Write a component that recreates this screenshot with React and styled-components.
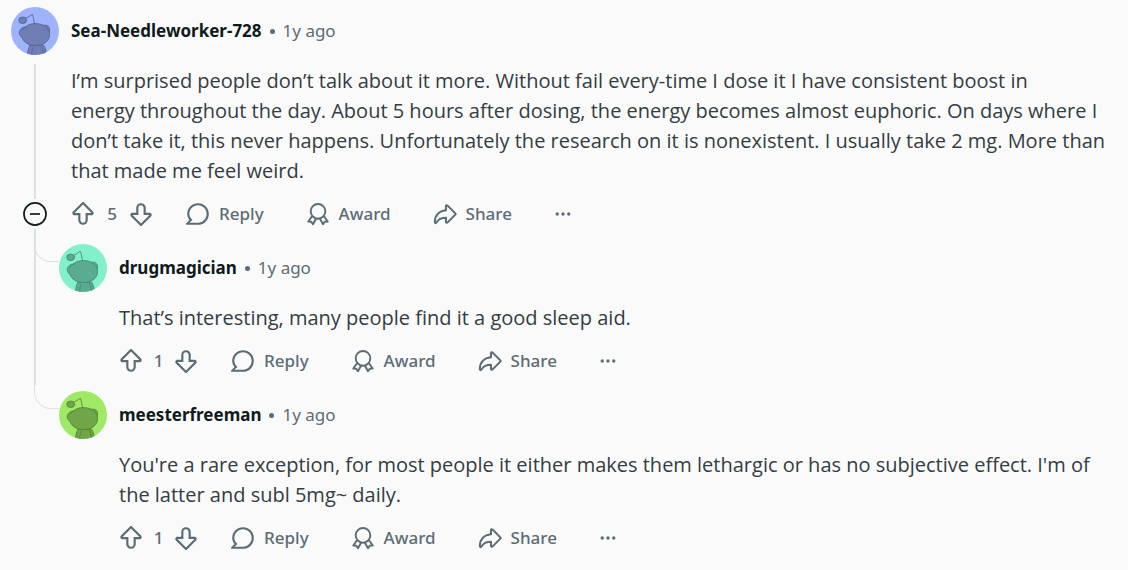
import React from 'react';
import styled, { createGlobalStyle } from 'styled-components';

const GlobalStyle = createGlobalStyle`
    * {
        box-sizing: border-box;
    }
    body {
        margin: 0;
        background: #fafafa;
        color: #333d42;
        font-family: 'Segoe UI', 'Noto Sans', 'Open Sans', sans-serif;
    }
`;

const Thread = styled.main`
    padding: 7px 11px 12px;
`;

const CommentGrid = styled.article`
    display: grid;
    grid-template-columns: 48px minmax(0, 1fr);
    column-gap: 12px;
`;

const AvatarLink = styled.a`
    display: block;
    width: 48px;
    height: 48px;
    border-radius: 50%;
    overflow: hidden;
    background: ${({ $color }) => $color};
`;

const CommentHeader = styled.header`
    display: flex;
    align-items: center;
    gap: 8px;
    height: 48px;
    font-size: 17px;
    line-height: 24px;
    color: #5c6c74;
`;

const Author = styled.a`
    font-weight: 700;
    color: #0f1a1c;
    text-decoration: none;
`;

const Dot = styled.span`
    width: 5px;
    height: 5px;
    border-radius: 50%;
    background: #5c6c74;
`;

const CommentBody = styled.div`
    grid-column: 2;
    padding-top: 11px;
`;

const Text = styled.p`
    margin: 0 0 8px;
    font-family: 'Segoe UI', 'Open Sans', 'Noto Sans', sans-serif;
    font-size: 20px;
    line-height: 30px;
    white-space: pre-line;
`;

const Rail = styled.div`
    display: flex;
    flex-direction: column;
    align-items: center;
    gap: 3px;
    padding-top: 9px;
`;

const RailLine = styled.span`
    width: 2px;
    flex: ${({ $end }) => ($end ? '0 0 5px' : '1')};
    background: #dbe0e4;
`;

const CollapseButton = styled.button`
    display: block;
    width: 24px;
    height: 24px;
    padding: 0;
    border: 0;
    background: none;
    color: #0f1a1c;
    cursor: pointer;
`;

const Replies = styled.ul`
    margin: 0;
    padding: 0;
    list-style: none;
`;

const ReplyItem = styled.li`
    display: grid;
    grid-template-columns: 48px minmax(0, 1fr);

    > article {
        padding-top: 10px;
    }
`;

// The trunk and the elbow share one grid cell, so that the curve leaves the line.
const Branch = styled.div`
    display: grid;
    padding-left: 23px;

    > span {
        grid-area: 1 / 1;
    }
`;

const Trunk = styled.span`
    width: 2px;
    height: ${({ $last }) => ($last ? '4px' : '100%')};
    background: #dbe0e4;
`;

const Elbow = styled.span`
    height: 28px;
    border: solid #dbe0e4;
    border-width: 0 0 1px 1px;
    border-bottom-left-radius: 17px;
`;

const ActionBar = styled.div`
    display: flex;
    align-items: center;
    height: 40px;
    font-size: 17px;
    line-height: 24px;
    font-weight: 500;
    color: #5c6c74;
`;

const Votes = styled.div`
    display: flex;
    align-items: center;
    margin-right: 33px;
`;

const Count = styled.span`
    width: ${({ $compact }) => ($compact ? '31px' : '34px')};
    text-align: center;
`;

const ActionButton = styled.button`
    display: flex;
    align-items: center;
    gap: 9px;
    margin: 0 ${({ $space }) => $space || '0'} 0 0;
    padding: 0;
    border: 0;
    background: none;
    color: inherit;
    font: inherit;
    cursor: pointer;

    svg {
        flex: none;
    }
`;

const Icon = ({ children, size = 24 }) => (
    <svg
        width={size}
        height={size}
        viewBox="0 0 20 20"
        fill="currentColor"
        aria-hidden="true"
    >
        {children}
    </svg>
);

const VoteIcon = ({ down }) => (
    <Icon>
        <path
            transform={down ? 'rotate(180 10 10)' : undefined}
            d="M10 19a3.966 3.966 0 01-3.96-3.962V10.98H2.838a1.731 1.731 0 01-1.605-1.073 1.734 1.734 0 01.377-1.895L9.364.254a.925.925 0 011.272 0l7.754 7.759c.498.499.646 1.242.376 1.894-.27.652-.9 1.073-1.605 1.073h-3.202v4.058A3.965 3.965 0 019.999 19H10zM2.989 9.179H7.84v5.731c0 1.13.81 2.163 1.934 2.278a2.163 2.163 0 002.386-2.15V9.179h4.851L10 2.163 2.989 9.179z"
        />
    </Icon>
);

const ReplyIcon = () => (
    <Icon>
        <path d="M10 1a9 9 0 00-9 9c0 1.947.79 3.58 1.935 4.957L.231 17.661A.784.784 0 00.785 19H10a9 9 0 009-9 9 9 0 00-9-9zm0 16.2H6.162c-.994.004-1.907.053-3.045.144l-.076-.188a36.981 36.981 0 002.328-2.087l-1.05-1.263C3.297 12.576 2.8 11.331 2.8 10c0-3.97 3.23-7.2 7.2-7.2s7.2 3.23 7.2 7.2-3.23 7.2-7.2 7.2z" />
    </Icon>
);

const AwardIcon = () => (
    <Icon>
        <g
            fill="none"
            stroke="currentColor"
            strokeWidth="1.6"
            strokeLinejoin="round"
        >
            <circle cx="10" cy="7.8" r="6.1" />
            <path d="M5 11.9l-3.1 4.3 2.5.3 1.4 2.1 2.7-4.8M15 11.9l3.1 4.3-2.5.3-1.4 2.1-2.7-4.8" />
        </g>
    </Icon>
);

const ShareIcon = () => (
    <Icon>
        <path
            fill="none"
            stroke="currentColor"
            strokeWidth="1.7"
            strokeLinejoin="round"
            d="M12.2 3l6.4 6.5c.3.3.3.7 0 1L12.2 17c-.6.6-1.4.2-1.4-.5v-3.3c-3.7 0-6.2 1.1-7.9 3.9-.5.8-1.4.6-1.4-.4C1.6 11.3 4.9 7.4 10.8 6.9V3.5c0-.8.8-1.1 1.4-.5z"
        />
    </Icon>
);

const MoreIcon = () => (
    <Icon>
        <circle cx="5.2" cy="10" r="1.4" />
        <circle cx="10" cy="10" r="1.4" />
        <circle cx="14.8" cy="10" r="1.4" />
    </Icon>
);

const CollapseIcon = () => (
    <Icon>
        <circle
            cx="10"
            cy="10"
            r="9.2"
            fill="none"
            stroke="currentColor"
            strokeWidth="1.4"
        />
        <path d="M5.8 9.3h8.4v1.4H5.8z" />
    </Icon>
);

const Snoo = ({ fill, line }) => (
    <svg width="48" height="48" viewBox="0 0 48 48" aria-hidden="true">
        <g
            fill={fill}
            stroke={line}
            strokeWidth="0.9"
            strokeLinecap="round"
            strokeLinejoin="round"
        >
            <path d="M16.8 49c-.3-4 .4-8 2.2-11h13.500c2 3 2.800 7 3.200 11z" />
            <path
                d="M22 40.500c-1 2.500-1.300 5-1.200 8M30.500 39.500c1.600 3 2 6 1.900 9"
                fill="none"
            />
            <path
                d="M15.5 10.8c2.2-.2 3.8-2.8 5.8-3.3 1.3 2.5 1.3 6 2.1 9"
                fill="none"
            />
            <ellipse cx="11.7" cy="13.3" rx="3.9" ry="3.3" />
            <path d="M32.5 18.5c3-1.2 6 .7 6.1 3.800.1 2-.6 3.300-1.300 4.200z" />
            <path d="M14.5 20c2.5-2.4 6-3.4 9.8-3.4 8 0 14.2 4 14.3 10.6.1 6.8-5.5 11.3-14.3 11.3-7 0-11.5-3.2-13.3-8-1.8-1.2-3.2-3.6-2.6-6 .7-2.8 3.2-4.4 6.1-4.5z" />
            <path d="M11.5 22.8c.8-1.4 1.900-2.200 3.400-2.600" fill="none" />
        </g>
    </svg>
);

const Comment = ({ comment, children }) => (
    <CommentGrid>
        <AvatarLink
            href="#profile"
            aria-label={comment.author}
            $color={comment.avatar.background}
        >
            <Snoo fill={comment.avatar.fill} line={comment.avatar.line} />
        </AvatarLink>
        <CommentHeader>
            <Author href="#profile">{comment.author}</Author>
            <Dot />
            <time>{comment.time}</time>
        </CommentHeader>
        {children}
        <CommentBody>
            <Text>{comment.text}</Text>
            <ActionBar>
                <Votes>
                    <ActionButton aria-label="Upvote">
                        <VoteIcon />
                    </ActionButton>
                    <Count $compact={comment.votes === 1}>
                        {comment.votes}
                    </Count>
                    <ActionButton aria-label="Downvote">
                        <VoteIcon down />
                    </ActionButton>
                </Votes>
                <ActionButton $space="42px">
                    <ReplyIcon />
                    Reply
                </ActionButton>
                <ActionButton $space="42px">
                    <AwardIcon />
                    Award
                </ActionButton>
                <ActionButton $space="39px">
                    <ShareIcon />
                    Share
                </ActionButton>
                <ActionButton aria-label="More actions">
                    <MoreIcon />
                </ActionButton>
            </ActionBar>
        </CommentBody>
    </CommentGrid>
);

const root = {
    author: 'Sea-Needleworker-728',
    time: '1y ago',
    votes: 5,
    avatar: { background: '#9fb3fd', fill: '#6f7fb5', line: '#56649a' },
    text: `I’m surprised people don’t talk about it more. Without fail every-time I dose it I have consistent boost in
energy throughout the day. About 5 hours after dosing, the energy becomes almost euphoric. On days where I
don’t take it, this never happens. Unfortunately the research on it is nonexistent. I usually take 2 mg. More than
that made me feel weird.`,
};

const replies = [
    {
        author: 'drugmagician',
        time: '1y ago',
        votes: 1,
        avatar: { background: '#82f0cb', fill: '#5aab91', line: '#438974' },
        text: 'That’s interesting, many people find it a good sleep aid.',
    },
    {
        author: 'meesterfreeman',
        time: '1y ago',
        votes: 1,
        avatar: { background: '#a0e967', fill: '#70a548', line: '#548535' },
        text: `You're a rare exception, for most people it either makes them lethargic or has no subjective effect. I'm of
the latter and subl 5mg~ daily.`,
    },
];

const App = () => {
    return (
        <>
            <GlobalStyle />
            <Thread>
                <Comment comment={root}>
                    <Rail>
                        <RailLine />
                        <CollapseButton aria-label="Collapse replies">
                            <CollapseIcon />
                        </CollapseButton>
                        <RailLine $end />
                    </Rail>
                </Comment>
                <Replies>
                    {replies.map((reply, index) => (
                        <ReplyItem key={reply.author}>
                            <Branch>
                                <Trunk $last={index === replies.length - 1} />
                                <Elbow />
                            </Branch>
                            <Comment comment={reply} />
                        </ReplyItem>
                    ))}
                </Replies>
            </Thread>
        </>
    );
};

export default App;
